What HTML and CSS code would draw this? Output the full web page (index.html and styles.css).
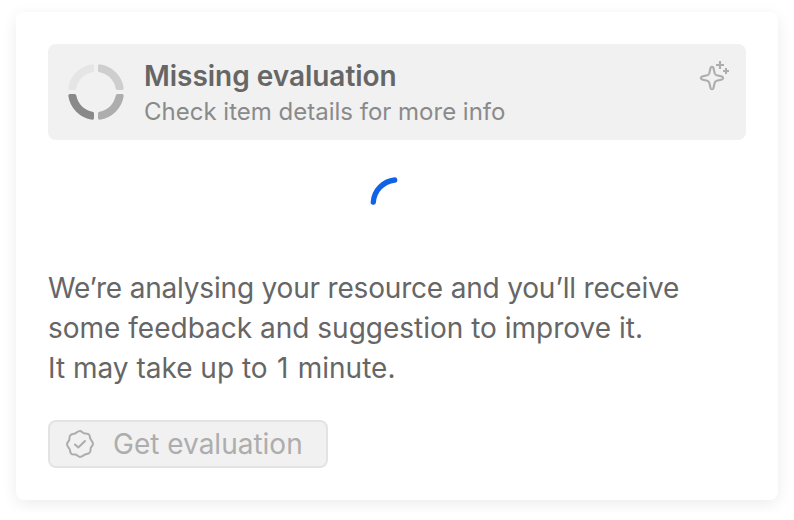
FILE: index.html
```html
<!DOCTYPE html>
<html lang="en">
<head>
<meta charset="utf-8">
<title>Evaluation</title>
<link rel="stylesheet" href="styles.css">
</head>
<body>
<main class="card">
  <header class="banner">
    <svg class="ring" width="56" height="56" viewBox="0 0 56 56" aria-hidden="true">
      <defs><path id="segment" d="M24.2 0.3Q26 0.1 26 2V6.5Q26 8 24.5 8.3A20 20 0 0 0 8.3 24.5Q8 26 6.5 26H2Q0.1 26 0.3 24.2A28 28 0 0 1 24.2 0.3Z"/></defs>
      <use href="#segment" fill="#e5e5e5"/>
      <use href="#segment" fill="#cecece" transform="rotate(90 28 28)"/>
      <use href="#segment" fill="#adadad" transform="rotate(180 28 28)"/>
      <use href="#segment" fill="#898989" transform="rotate(270 28 28)"/>
    </svg>
    <div class="heading">
      <h1 class="title">Missing evaluation</h1>
      <p class="subtitle">Check item details for more info</p>
    </div>
    <svg class="sparkle" width="32" height="32" viewBox="0 0 32 32" aria-hidden="true">
      <path d="M12.6 7.7Q14 5.7 15.4 7.7L16.7 13.2Q17.2 14.8 18.8 15.3L24 16.6Q26.3 18 24 19.4L18.8 20.7Q17.2 21.2 16.7 22.8L15.4 28.3Q14 30.3 12.6 28.3L11.3 22.8Q10.8 21.2 9.2 20.7L4 19.4Q1.7 18 4 16.6L9.2 15.3Q10.8 14.8 11.3 13.2Z"/>
      <path d="M22 1V9M18 5H26M28 8V14M25 11H31"/>
    </svg>
  </header>
  <div class="loader">
    <svg width="64" height="64" viewBox="0 0 64 64" aria-hidden="true"><path d="M8.3 34.2A24 24 0 0 1 29.7 12"/></svg>
  </div>
  <p class="message"><span class="line-first">We’re analysing your resource and you’ll receive</span><br>some feedback and suggestion to improve it.<br>It may take up to <span class="digit">1</span> minute.</p>
  <button class="action" disabled>
    <svg class="badge" width="32" height="32" viewBox="0 0 32 32" aria-hidden="true">
      <path d="M16 3C18 3 18.6 5.4 20.8 5.4S24.2 5.2 25.2 6.8S25.6 9.6 26.6 11.2S29 14 29 16S26.6 18.6 26.6 20.8S26.8 24.2 25.2 25.2S22.4 25.6 20.8 26.6S18 29 16 29S13.4 26.6 11.2 26.6S7.8 26.8 6.8 25.2S6.4 22.4 5.4 20.8S3 18 3 16S5.4 13.4 5.4 11.2S5.2 7.8 6.8 6.8S9.6 6.4 11.2 5.4S14 3 16 3Z"/>
      <path d="M11 16.4L14.3 19.5L21 13"/>
    </svg>
    <span>Get evaluation</span>
  </button>
</main>
</body>
</html>
```
FILE: styles.css
```css
* { box-sizing: border-box; }
body { margin: 0; padding: 12px 16px; background: #fff; font-family: Inter, sans-serif; }
.card { width: 762px; height: 488px; padding: 32px; border-radius: 8px; box-shadow: 0 4px 16px rgba(0,0,0,.08); }
.banner { display: flex; width: 698px; height: 96px; padding: 16px 16px 16px 20px; border-radius: 8px; background: #f1f1f1; }
.ring { margin-top: 4px; }
.heading { flex: 1; margin-left: 20px; }
.title { margin: 0; font-size: 28px; line-height: 32px; font-weight: 600; letter-spacing: -.03px; color: #666; }
.subtitle { margin: 4px 0 0; font-size: 24px; line-height: 32px; color: #8a8a8a; }
.sparkle { fill: none; stroke: #adadad; stroke-width: 2.1; stroke-linejoin: round; }
.loader { display: flex; justify-content: center; margin-top: 28px; height: 64px; }
.loader path { fill: none; stroke: #1062e6; stroke-width: 5.3; stroke-linecap: round; }
.message { margin: 36px 0 0; font-size: 28px; line-height: 40px; color: #666; }
.line-first { letter-spacing: -.19px; }
.digit { margin: 0 1.5px; }
.action { display: flex; align-items: center; gap: 17px; margin-top: 32px; width: 280px; height: 48px; padding: 0 14px; border: 2px solid #e3e3e3; border-radius: 8px; background: #f1f1f1; font: 28px Inter, sans-serif; color: #adadad; }
.badge { fill: none; stroke: #adadad; stroke-width: 2; stroke-linecap: round; stroke-linejoin: round; }
```
